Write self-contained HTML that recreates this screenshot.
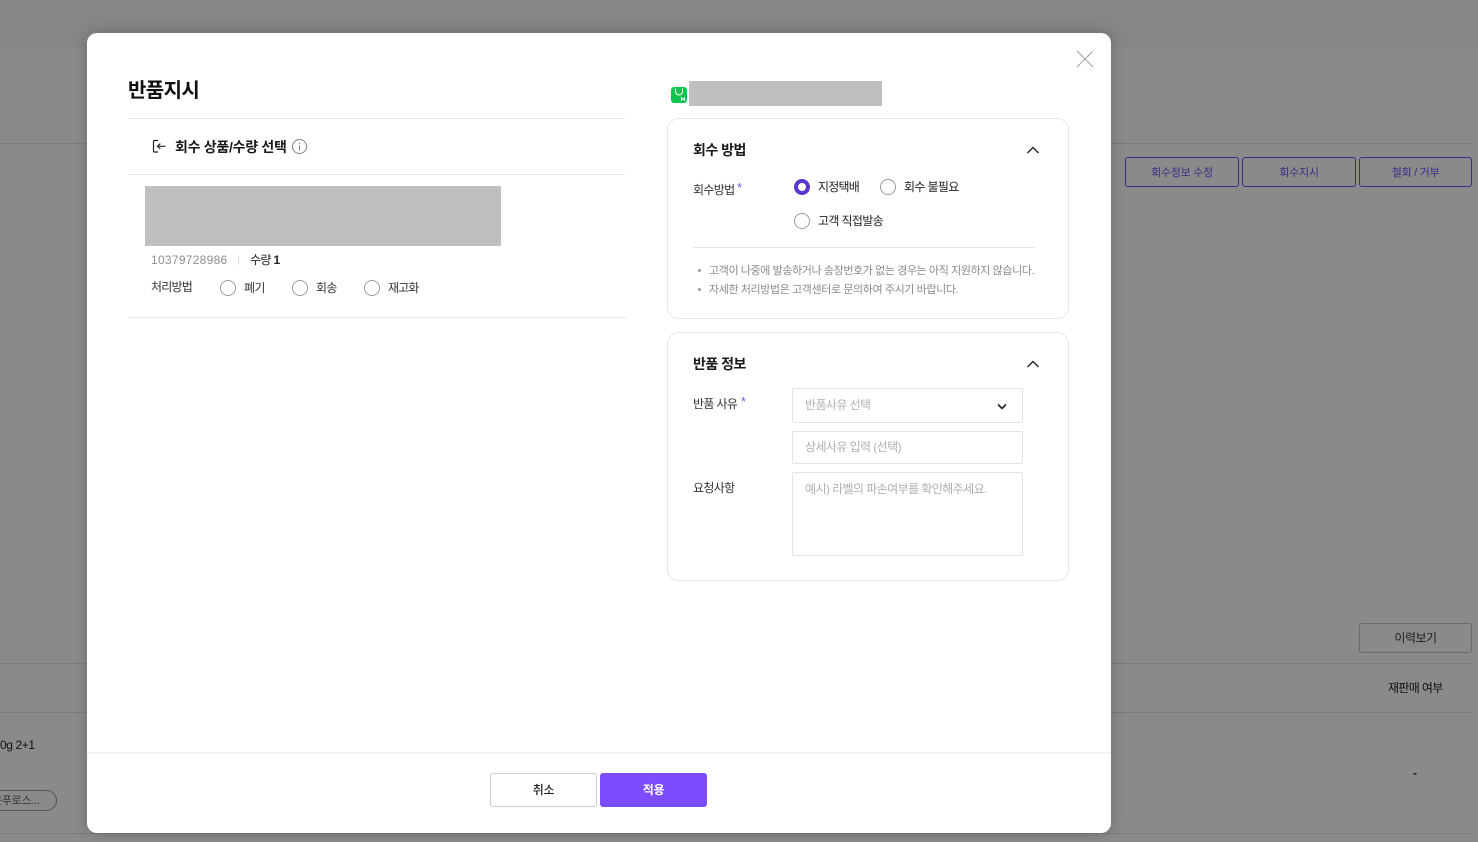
<!DOCTYPE html>
<html lang="ko">
<head>
<meta charset="utf-8">
<title>반품지시</title>
<style>
html,body{margin:0;padding:0;width:1478px;height:842px;overflow:hidden;background:#8a8a8a}
body{position:relative;font-family:"Liberation Sans","Noto Sans CJK KR",sans-serif;color:#111}
div,span{position:absolute;box-sizing:border-box;white-space:nowrap}
.t{line-height:18px;font-size:12px;letter-spacing:-.65px}
.r{width:16px;height:16px;border:1px solid #9a9a9a;border-radius:50%;background:#fff}
.line{height:1px;background:#7c7c7c}
.card{left:667px;width:402px;border:1px solid #e6e6e6;border-radius:12px;background:#fff}
.hr{height:1px;background:#e6e6e6}
.bbtn{top:157px;height:30px;border:1px solid #3a2d8a;border-radius:3px;text-align:center;font-size:11px;line-height:30px;color:#3a2d8a;letter-spacing:-.3px}
.field{left:792px;width:231px;border:1px solid #e4e4e4;border-radius:2px;background:#fff}
.ph{font-size:12px;line-height:18px;color:#b0b0b0;letter-spacing:-.58px}
.star{font-size:13px;line-height:18px;color:#7a5ce0}
.note{font-size:11px;line-height:18px;color:#8a8a8a;letter-spacing:-.4px}
</style>
</head>
<body>
<div style="left:0;top:0;width:1478px;height:48px;background:#868686"></div>
<div class="line" style="left:0;top:143px;width:1472px"></div>
<div class="line" style="left:0;top:663px;width:1472px"></div>
<div class="line" style="left:0;top:712px;width:1472px"></div>
<div class="line" style="left:0;top:833px;width:1472px"></div>
<div class="bbtn" style="left:1125px;width:114px">회수정보 수정</div>
<div class="bbtn" style="left:1242px;width:114px">회수지시</div>
<div class="bbtn" style="left:1359px;width:113px">철회 / 거부</div>
<div style="left:1359px;top:623px;width:113px;height:30px;border:1px solid #6a6a6a;border-radius:3px;text-align:center;font-size:12px;line-height:28px;color:#1a1a1a;letter-spacing:-.5px">이력보기</div>
<div class="t" style="left:1388px;top:679px;color:#111">재판매 여부</div>
<div class="t" style="left:1413px;top:764px;color:#111;font-weight:700">-</div>
<div class="t" style="left:0;top:736px;color:#111;letter-spacing:-.4px">0g 2+1</div>
<div style="left:-40px;top:790px;width:97px;height:21px;border:1px solid #555;border-radius:11px"></div>
<div style="left:-8px;top:793px;font-size:11px;line-height:16px;color:#333;letter-spacing:-.3px">큰푸로스...</div>

<div style="left:87px;top:33px;width:1024px;height:800px;background:#fff;border-radius:10px;box-shadow:0 0 14px rgba(0,0,0,.22)">
</div>

<svg style="position:absolute;left:1076px;top:50px" width="18" height="18" viewBox="0 0 18 18"><path d="M1 1L17 17M17 1L1 17" stroke="#a0a0a0" stroke-width="1" fill="none"/></svg>

<div style="left:128px;top:77px;font-size:20px;line-height:29px;font-weight:700;letter-spacing:-.6px;color:#111">반품지시</div>
<div class="hr" style="left:128px;top:118px;width:497px"></div>
<svg style="position:absolute;left:152px;top:139px" width="15" height="15" viewBox="0 0 15 15"><path d="M6 1.5H2.2A.8.8 0 0 0 1.5 2.3V12.2A.8.8 0 0 0 2.2 13H6M13.5 7.3H5.5M8.3 4.6L5.5 7.3L8.3 10" stroke="#222" stroke-width="1.2" fill="none"/></svg>
<div style="left:175px;top:137px;font-size:14px;line-height:20px;font-weight:700;letter-spacing:-.28px;color:#1a1a1a">회수 상품/수량 선택</div>
<svg style="position:absolute;left:292px;top:139px" width="15" height="15" viewBox="0 0 15 15"><circle cx="7.5" cy="7.5" r="7" stroke="#808080" fill="none"/><path d="M7.5 6.5V11.5M7.5 3.6V5" stroke="#808080" fill="none"/></svg>
<div class="hr" style="left:128px;top:174px;width:497px"></div>
<div style="left:145px;top:186px;width:356px;height:60px;background:#bfbfbf"></div>
<div class="t" style="left:151px;top:251px;color:#8e8e8e;letter-spacing:.28px">10379728986</div>
<div style="left:238px;top:255px;width:1px;height:10px;background:#ddd"></div>
<div class="t" style="left:250px;top:251px;color:#222">수량 <b style="font-weight:700">1</b></div>
<div class="t" style="left:151px;top:278px;color:#333;letter-spacing:-.8px">처리방법</div>
<div class="r" style="left:220px;top:280px"></div>
<div class="t" style="left:244px;top:279px;color:#333">폐기</div>
<div class="r" style="left:292px;top:280px"></div>
<div class="t" style="left:316px;top:279px;color:#333">회송</div>
<div class="r" style="left:364px;top:280px"></div>
<div class="t" style="left:388px;top:279px;color:#333;letter-spacing:-.9px">재고화</div>
<div class="hr" style="left:128px;top:317px;width:498px"></div>

<div style="left:671px;top:87px;width:16px;height:16px;background:#0cc44e;border-radius:3px"></div>
<svg style="position:absolute;left:671px;top:87px" width="16" height="16" viewBox="0 0 16 16"><path d="M4.5 1.5V4.5A3.5 3.5 0 0 0 11.5 4.5V1.5" stroke="#fff" stroke-width="1" fill="none"/><path d="M10.5 14V11L12 12.5L13.5 11V14" stroke="#fff" stroke-width="1" fill="none"/></svg>
<div style="left:689px;top:81px;width:193px;height:25px;background:#bfbfbf"></div>

<div class="card" style="top:118px;height:201px"></div>
<div style="left:693px;top:140px;font-size:14px;line-height:20px;font-weight:700;letter-spacing:-.5px;color:#1a1a1a">회수 방법</div>
<svg style="position:absolute;left:1025.5px;top:145px" width="14" height="10" viewBox="0 0 14 10"><path d="M1.5 8L7 2.5L12.5 8" stroke="#222" stroke-width="1.4" fill="none"/></svg>
<div class="t" style="left:693px;top:181px;color:#333">회수방법</div>
<div class="star" style="left:737px;top:179px">*</div>
<div style="left:794px;top:179px;width:16px;height:16px;border:4px solid #5a35d0;border-radius:50%;background:#fff"></div>
<div class="t" style="left:818px;top:178px;color:#222;letter-spacing:-.8px">지정택배</div>
<div class="r" style="left:880px;top:179px"></div>
<div class="t" style="left:904px;top:178px;color:#222">회수 불필요</div>
<div class="r" style="left:794px;top:213px"></div>
<div class="t" style="left:818px;top:212px;color:#222">고객 직접발송</div>
<div class="hr" style="left:693px;top:247px;width:342px"></div>
<div style="left:698px;top:269px;width:3px;height:3px;border-radius:50%;background:#999"></div>
<div class="note" style="left:709px;top:262px">고객이 나중에 발송하거나 송장번호가 없는 경우는 아직 지원하지 않습니다.</div>
<div style="left:698px;top:288px;width:3px;height:3px;border-radius:50%;background:#999"></div>
<div class="note" style="left:709px;top:281px">자세한 처리방법은 고객센터로 문의하여 주시기 바랍니다.</div>

<div class="card" style="top:332px;height:249px"></div>
<div style="left:693px;top:354px;font-size:14px;line-height:20px;font-weight:700;letter-spacing:-.5px;color:#1a1a1a">반품 정보</div>
<svg style="position:absolute;left:1025.5px;top:359px" width="14" height="10" viewBox="0 0 14 10"><path d="M1.5 8L7 2.5L12.5 8" stroke="#222" stroke-width="1.4" fill="none"/></svg>
<div class="t" style="left:693px;top:395px;color:#333">반품 사유</div>
<div class="star" style="left:741px;top:393px">*</div>
<div class="field" style="top:388px;height:35px"></div>
<div class="ph" style="left:805px;top:396px">반품사유 선택</div>
<svg style="position:absolute;left:996px;top:402px" width="12" height="10" viewBox="0 0 12 10"><path d="M2 2.5L6 6.5L10 2.5" stroke="#222" stroke-width="1.6" fill="none"/></svg>
<div class="field" style="top:431px;height:33px"></div>
<div class="ph" style="left:805px;top:438px">상세사유 입력 (선택)</div>
<div class="t" style="left:693px;top:479px;color:#333">요청사항</div>
<div class="field" style="top:472px;height:84px"></div>
<div class="ph" style="left:805px;top:480px">예시) 라벨의 파손여부를 확인해주세요.</div>

<div style="left:87px;top:752px;width:1024px;height:2px;background:#f3f3f3"></div>
<div style="left:490px;top:773px;width:107px;height:34px;border:1px solid #ccc;border-radius:3px;background:#fff;text-align:center;font-size:12px;line-height:32px;font-weight:500;color:#222;letter-spacing:-.3px">취소</div>
<div style="left:600px;top:773px;width:107px;height:34px;border-radius:3px;background:#7c4dff;text-align:center;font-size:12px;line-height:34px;font-weight:700;color:#fff;letter-spacing:-.3px">적용</div>
</body>
</html>
